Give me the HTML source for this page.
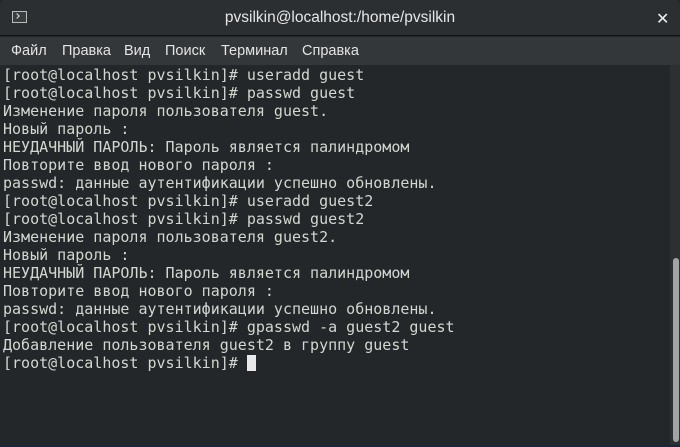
<!DOCTYPE html>
<html><head><meta charset="utf-8"><style>
*{margin:0;padding:0;box-sizing:border-box}
body{width:680px;height:447px;overflow:hidden;background:#232729;position:relative;font-family:"Liberation Sans","DejaVu Sans",sans-serif}
#title{position:absolute;left:0;top:0;width:680px;height:36px;background:#2c2f32;border-bottom:1px solid #121314;border-radius:5px 5px 0 0}
#title .t{position:absolute;left:0;right:0;top:9px;text-align:center;color:#e6e6e6;font-size:15.5px}
#icon{position:absolute;left:12px;top:11px;width:15px;height:12px;border:1px solid #bbb;background:#3a3d40}
#icon:after{content:"";position:absolute;left:2px;top:2px;width:3px;height:3px;border-right:1px solid #ddd;border-bottom:1px solid #ddd;transform:rotate(-45deg)}
#close{position:absolute;left:656px;top:9px;color:#eee;font-size:16px;font-weight:bold;font-family:"DejaVu Sans",sans-serif}
#menu{position:absolute;left:0;top:37px;width:680px;height:28px;background:#33373a;color:#e4e4e4;font-size:14.5px}
#menu span{position:absolute;top:6px}
#term{position:absolute;left:3px;top:66px;font-family:"DejaVu Sans Mono","Liberation Mono",monospace;font-size:15px;line-height:18px;color:#d3d7cf;white-space:pre}
#cur{display:inline-block;width:9px;height:16px;background:#e8e8e8;vertical-align:-3px}
#sb{position:absolute;left:670px;top:65px;width:10px;height:380px;background:#2c3033}
#thumb{position:absolute;left:673px;top:258px;width:6px;height:184px;background:#a2a4a4;border-radius:3px}
#bot{position:absolute;left:0;top:445px;width:680px;height:2px;background:#0c2a4e}
</style></head><body>
<div id="title"><div id="icon"></div><div class="t">pvsilkin@localhost:/home/pvsilkin</div><div id="close">✕</div></div>
<div id="menu"><span style="left:11px">Файл</span><span style="left:62px">Правка</span><span style="left:124px">Вид</span><span style="left:165px">Поиск</span><span style="left:221px">Терминал</span><span style="left:302px">Справка</span></div>
<div id="term">[root@localhost pvsilkin]# useradd guest
[root@localhost pvsilkin]# passwd guest
Изменение пароля пользователя guest.
Новый пароль :
НЕУДАЧНЫЙ ПАРОЛЬ: Пароль является палиндромом
Повторите ввод нового пароля :
passwd: данные аутентификации успешно обновлены.
[root@localhost pvsilkin]# useradd guest2
[root@localhost pvsilkin]# passwd guest2
Изменение пароля пользователя guest2.
Новый пароль :
НЕУДАЧНЫЙ ПАРОЛЬ: Пароль является палиндромом
Повторите ввод нового пароля :
passwd: данные аутентификации успешно обновлены.
[root@localhost pvsilkin]# gpasswd -a guest2 guest
Добавление пользователя guest2 в группу guest
[root@localhost pvsilkin]# <span id="cur"></span></div>
<div id="sb"></div><div id="thumb"></div><div id="bot"></div>
</body></html>
